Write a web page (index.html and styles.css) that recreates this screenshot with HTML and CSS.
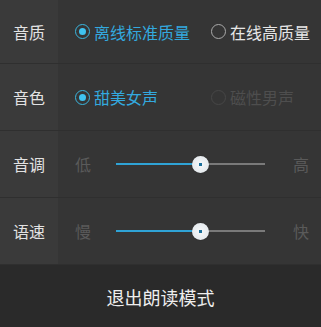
FILE: index.html
```html
<!DOCTYPE html>
<html>
<head>
<meta charset="utf-8">
<link rel="stylesheet" href="styles.css">
</head>
<body>
<div class="panel">
  <div class="row">
    <div class="label">音质</div>
    <div class="content">
      <div class="opt on"><span class="radio"></span>离线标准质量</div>
      <div class="opt"><span class="radio"></span>在线高质量</div>
    </div>
  </div>
  <div class="row">
    <div class="label">音色</div>
    <div class="content">
      <div class="opt on"><span class="radio"></span>甜美女声</div>
      <div class="opt dis"><span class="radio"></span>磁性男声</div>
    </div>
  </div>
  <div class="row">
    <div class="label">音调</div>
    <div class="content slide">
      <span class="end">低</span>
      <div class="track"><div class="fill" style="width:57%"></div><span class="thumb" style="left:57%"></span></div>
      <span class="end">高</span>
    </div>
  </div>
  <div class="row">
    <div class="label">语速</div>
    <div class="content slide">
      <span class="end">慢</span>
      <div class="track"><div class="fill" style="width:57%"></div><span class="thumb" style="left:57%"></span></div>
      <span class="end">快</span>
    </div>
  </div>
</div>
<div class="exit">退出朗读模式</div>
</body>
</html>
```
FILE: styles.css
```css
html, body { margin: 0; padding: 0; }
body {
  width: 321px; height: 327px; overflow: hidden;
  background: #2a2a2a;
  font-family: "Noto Sans CJK SC", "Noto Sans", sans-serif;
}
.panel { display: flex; flex-direction: column; }
.row {
  display: flex; height: 67px;
  border-bottom: 1px solid #2f2f2f;
  box-sizing: border-box;
}
.row:first-child { height: 64px; }
.label {
  width: 58px; background: #3a3a3a;
  display: flex; align-items: center; justify-content: center;
  color: #e2e2e2; font-size: 16px;
}
.content {
  flex: 1; background: #353535;
  display: flex; align-items: center;
  padding-left: 17px;
}
.opt {
  display: flex; align-items: center;
  font-size: 16px; color: #e6e6e6;
  width: 136px;
}
.opt + .opt { width: auto; }
.radio {
  width: 13px; height: 13px; border-radius: 50%;
  border: 1.5px solid #aaa;
  margin-right: 4px; position: relative;
  flex: none;
}
.opt.on { color: #33a9df; }
.opt.on .radio { border-color: #3ab6df; }
.opt.on .radio::after {
  content: ""; position: absolute; left: 3px; top: 3px;
  width: 7px; height: 7px; border-radius: 50%; background: #3fc3f0;
}
.opt.dis { color: #4e4e4e; }
.opt.dis .radio { border-color: #474747; }
.slide { padding-right: 12px; }
.end { font-size: 16px; color: #5a5a5a; width: 16px; }
.track {
  flex: 1; position: relative; height: 2px; background: #7a7a7a;
  margin: 0 28px 0 25px;
}
.fill { height: 2px; background: #2fa3d6; }
.thumb {
  position: absolute; top: 1px; width: 17px; height: 17px;
  margin: -8.5px 0 0 -8.5px; border-radius: 50%;
  background: radial-gradient(circle, #1b6f9a 0 1.5px, #f2f5f7 2px, #dfe4e8 100%);
  box-shadow: 0 0 1px rgba(0,0,0,0.5);
}
.exit {
  height: 63px; display: flex; align-items: center; justify-content: center;
  color: #eeeeee; font-size: 18px; background: #2a2a2a;
}
```
